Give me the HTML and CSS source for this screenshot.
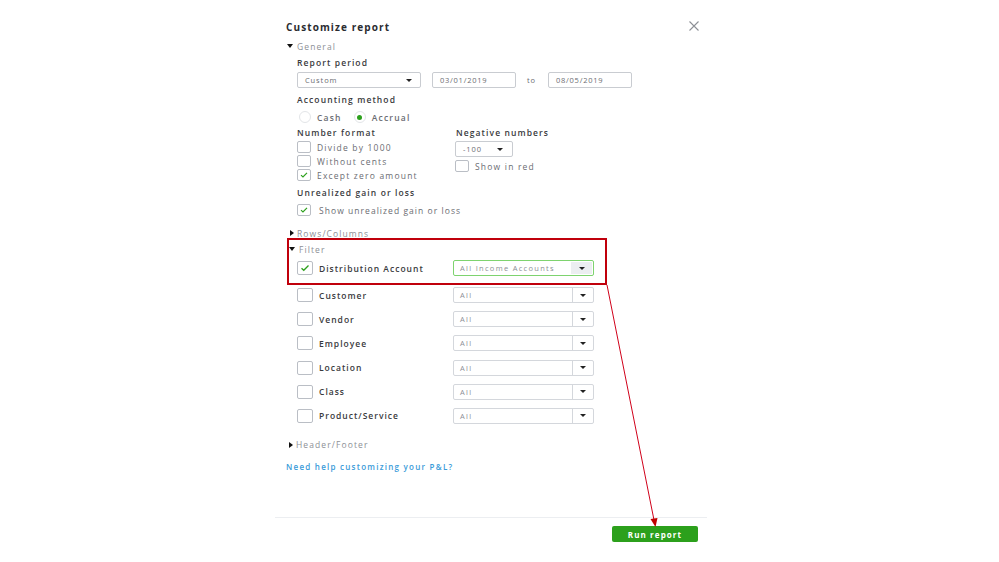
FILE: index.html
```html
<!DOCTYPE html>
<html>
<head>
<meta charset="utf-8">
<link rel="stylesheet" href="styles.css">
</head>
<body>
<div class="panel">
  <div class="content">
    <div class="titlebar">
      <div class="title">Customize report</div>
      <svg class="close" width="10" height="10" viewBox="0 0 10 10"><path d="M0.5 0.5 L9.5 9.5 M9.5 0.5 L0.5 9.5" stroke="#8d9096" stroke-width="1.1" fill="none"/></svg>
    </div>

    <div class="toggle t-general"><span class="tri down"></span>General</div>

    <div class="section">
      <div class="label l-period">Report period</div>
      <div class="period-row">
        <div class="select sel-custom"><span>Custom</span><span class="caret"></span></div>
        <div class="input">03/01/2019</div>
        <span class="to">to</span>
        <div class="input">08/05/2019</div>
      </div>

      <div class="label l-method">Accounting method</div>
      <div class="radios">
        <span class="radio"></span><span class="opt">Cash</span>
        <span class="radio on"></span><span class="opt">Accrual</span>
      </div>

      <div class="cols">
        <div class="col col-left">
          <div class="label">Number format</div>
          <div class="check-row r-first"><span class="box"></span><span class="opt">Divide by 1000</span></div>
          <div class="check-row"><span class="box"></span><span class="opt">Without cents</span></div>
          <div class="check-row"><span class="box checked"><svg viewBox="0 0 14 12" width="14" height="12"><path d="M3.5 6.2 L5.8 8.3 L10.5 3.6" stroke="#2ca01c" stroke-width="1.4" fill="none"/></svg></span><span class="opt">Except zero amount</span></div>
        </div>
        <div class="col col-right">
          <div class="label">Negative numbers</div>
          <div class="select sel-neg"><span>-100</span><span class="caret"></span></div>
          <div class="check-row r-red"><span class="box"></span><span class="opt">Show in red</span></div>
        </div>
      </div>

      <div class="label l-unreal">Unrealized gain or loss</div>
      <div class="check-row r-unreal"><span class="box checked"><svg viewBox="0 0 14 12" width="14" height="12"><path d="M3.5 6.2 L5.8 8.3 L10.5 3.6" stroke="#2ca01c" stroke-width="1.4" fill="none"/></svg></span><span class="opt wide">Show unrealized gain or loss</span></div>
    </div>

    <div class="toggle t-rows"><span class="tri right"></span>Rows/Columns</div>

    <div class="highlight">
      <div class="toggle t-filter"><span class="tri down"></span>Filter</div>
      <div class="filter-row fr-dist">
        <span class="box big checked"><svg viewBox="0 0 16 14" width="16" height="14"><path d="M4 7.2 L6.6 9.6 L12 4.2" stroke="#2ca01c" stroke-width="1.5" fill="none"/></svg></span>
        <span class="fname">Distribution Account</span>
        <div class="dd active"><span class="ddtext">All Income Accounts</span><span class="ddbtn"><span class="caret"></span></span></div>
      </div>
    </div>

    <div class="filters">
      <div class="filter-row"><span class="box big"></span><span class="fname">Customer</span><div class="dd"><span class="ddtext">All</span><span class="ddbtn"><span class="caret"></span></span></div></div>
      <div class="filter-row"><span class="box big"></span><span class="fname">Vendor</span><div class="dd"><span class="ddtext">All</span><span class="ddbtn"><span class="caret"></span></span></div></div>
      <div class="filter-row"><span class="box big"></span><span class="fname">Employee</span><div class="dd"><span class="ddtext">All</span><span class="ddbtn"><span class="caret"></span></span></div></div>
      <div class="filter-row"><span class="box big"></span><span class="fname">Location</span><div class="dd"><span class="ddtext">All</span><span class="ddbtn"><span class="caret"></span></span></div></div>
      <div class="filter-row"><span class="box big"></span><span class="fname">Class</span><div class="dd"><span class="ddtext">All</span><span class="ddbtn"><span class="caret"></span></span></div></div>
      <div class="filter-row"><span class="box big"></span><span class="fname">Product/Service</span><div class="dd"><span class="ddtext">All</span><span class="ddbtn"><span class="caret"></span></span></div></div>
    </div>

    <div class="toggle t-header"><span class="tri right"></span>Header/Footer</div>

    <a class="help">Need help customizing your P&amp;L?</a>
  </div>

  <div class="footer">
    <button class="run">Run report</button>
  </div>
</div>

<svg class="annot" width="999" height="562" viewBox="0 0 999 562">
  <line x1="607" y1="285" x2="654" y2="520" stroke="#d0021b" stroke-width="1"/>
  <polygon points="650.5,519 657.5,518 655.5,527" fill="#c00000"/>
</svg>
</body>
</html>
```

FILE: styles.css
```css
* { box-sizing: border-box; }
html, body { margin: 0; padding: 0; background: #fff; }
body {
  width: 999px;
  height: 562px;
  position: relative;
  overflow: hidden;
  font-family: "Open Sans", "Liberation Sans", sans-serif;
  color: #393a3d;
}
.panel {
  margin-left: 275px;
  width: 432px;
  height: 562px;
  display: flex;
  flex-direction: column;
}
.content {
  padding: 20px 0 0 11px;
  height: 517px;
}
.titlebar {
  height: 14px;
  display: flex;
  align-items: center;
  justify-content: space-between;
  padding-right: 8px;
}
.title {
  font-size: 10px;
  font-weight: 700;
  letter-spacing: 1.1px;
  color: #2b2c30;
}
.close { display: block; margin-top: -2px; }

.toggle {
  height: 12px;
  display: flex;
  align-items: center;
  font-size: 8.5px;
  letter-spacing: 1.1px;
  color: #8d9096;
  white-space: nowrap;
}
.t-general { margin-top: 6px; margin-left: 1px; }
.t-rows { margin-top: 10px; margin-left: 4px; }
.t-filter { margin-top: 3px; }
.t-header { margin-top: 15px; margin-left: 3px; }
.tri { display: inline-block; width: 0; height: 0; margin-right: 4px; }
.tri.down { border-left: 3px solid transparent; border-right: 3px solid transparent; border-top: 4px solid #111; }
.tri.right { border-top: 3px solid transparent; border-bottom: 3px solid transparent; border-left: 4px solid #111; margin-right: 3px; }

.section { padding-left: 11px; }
.label {
  height: 12px;
  line-height: 12px;
  font-size: 8.5px;
  font-weight: 600;
  letter-spacing: 1.1px;
  color: #393a3d;
  white-space: nowrap;
}
.l-period { margin-top: 5px; }
.l-method { margin-top: 6px; }
.l-unreal { margin-top: 5px; }

.period-row {
  margin-top: 3px;
  height: 16px;
  display: flex;
  align-items: center;
}
.select {
  height: 16px;
  border: 1px solid #c9ccd1;
  border-radius: 2px;
  display: flex;
  align-items: center;
  justify-content: space-between;
  padding: 0 8px 0 7px;
  font-size: 7.5px;
  letter-spacing: 0.9px;
  color: #6b6c72;
}
.sel-custom { width: 124px; }
.caret {
  display: inline-block;
  width: 0; height: 0;
  border-left: 3px solid transparent;
  border-right: 3px solid transparent;
  border-top: 3px solid #222;
}
.input {
  margin-left: 11px;
  width: 84px;
  height: 16px;
  border: 1px solid #c9ccd1;
  border-radius: 2px;
  padding-left: 7px;
  line-height: 14px;
  font-size: 7.5px;
  letter-spacing: 0.75px;
  color: #6b6c72;
}
.to {
  margin-left: 11px;
  margin-right: 1px;
  font-size: 7.5px;
  color: #6b6c72;
  letter-spacing: 0.9px;
}

.radios {
  margin-top: 4px;
  height: 14px;
  display: flex;
  align-items: center;
}
.radio {
  width: 12px; height: 12px;
  border-radius: 50%;
  border: 1px solid #e3e5e8;
  margin-left: 2px;
  margin-right: 6px;
  position: relative;
  background: #fff;
}
.radio.on { margin-left: 0; }
.radio.on::after {
  content: "";
  position: absolute;
  left: 2.5px; top: 2.5px;
  width: 5px; height: 5px;
  border-radius: 50%;
  background: #2ca01c;
}
.opt {
  font-size: 8.5px;
  letter-spacing: 1.2px;
  color: #6b6c72;
  white-space: nowrap;
}
.radios .opt { margin-right: 12px; font-weight: 600; color: #6b6c72; }

.cols {
  margin-top: 3px;
  display: flex;
}
.col-left { width: 159px; }
.col-right { width: 160px; }
.check-row {
  height: 14px;
  display: flex;
  align-items: center;
}
.r-first { margin-top: 1px; }
.box {
  width: 14px; height: 12px;
  border: 1px solid #babec5;
  border-radius: 2px;
  margin-right: 6px;
  flex: none;
  display: flex;
  align-items: center;
  justify-content: center;
  background: #fff;
}
.box svg { display: block; }
.sel-neg { width: 58px; margin-top: 2px; margin-left: -1px; padding-right: 9px; }
.r-red { margin-top: 2px; margin-left: -1px; }
.r-unreal { margin-top: 4px; }
.opt.wide { margin-left: 2px; letter-spacing: 1.05px; }

.highlight {
  margin-top: -1px;
  margin-left: 1px;
  width: 320px;
  height: 47px;
  border: 2px solid #c0000c;
  padding-top: 0;
}
.filter-row {
  height: 16px;
  display: flex;
  align-items: center;
  padding-left: 8px;
}
.fr-dist { margin-top: 5px; }
.box.big { width: 16px; height: 14px; }
.fname {
  width: 134px;
  font-size: 8.5px;
  font-weight: 600;
  letter-spacing: 1px;
  color: #393a3d;
  white-space: nowrap;
}
.dd {
  width: 141px;
  height: 16px;
  border: 1px solid #d4d7dc;
  border-radius: 2px;
  display: flex;
  align-items: stretch;
  background: #fff;
}
.dd.active { border-color: #7ed36f; }
.ddtext {
  flex: 1;
  padding-left: 6px;
  display: flex;
  align-items: center;
  font-size: 7.5px;
  letter-spacing: 1.3px;
  color: #8d9096;
  white-space: nowrap;
}
.ddbtn {
  width: 21px;
  border-left: 1px solid #d4d7dc;
  display: flex;
  align-items: center;
  justify-content: center;
}
.dd.active .ddbtn { border-left: none; background: #eceef1; margin: 1px; }

.filters {
  margin-top: 2px;
  display: flex;
  flex-direction: column;
  gap: 8.2px;
  padding-left: 2px;
}
.filters .filter-row { padding-left: 9px; }

.help {
  display: block;
  margin-top: 10px;
  height: 12px;
  line-height: 12px;
  font-size: 8px;
  font-weight: 600;
  letter-spacing: 1.25px;
  color: #3a9bd9;
  white-space: nowrap;
}

.footer {
  border-top: 1px solid #eceef1;
  height: 45px;
  display: flex;
  justify-content: flex-end;
  align-items: flex-start;
  padding-top: 8px;
  padding-right: 9px;
}
.run {
  width: 86px;
  height: 16px;
  border: none;
  border-radius: 2px;
  background: #2ca01c;
  color: #fff;
  font-family: "Open Sans", "Liberation Sans", sans-serif;
  font-size: 8px;
  font-weight: 700;
  letter-spacing: 1.1px;
  padding: 0;
}

.annot {
  position: absolute;
  left: 0;
  top: 0;
  pointer-events: none;
}
```
